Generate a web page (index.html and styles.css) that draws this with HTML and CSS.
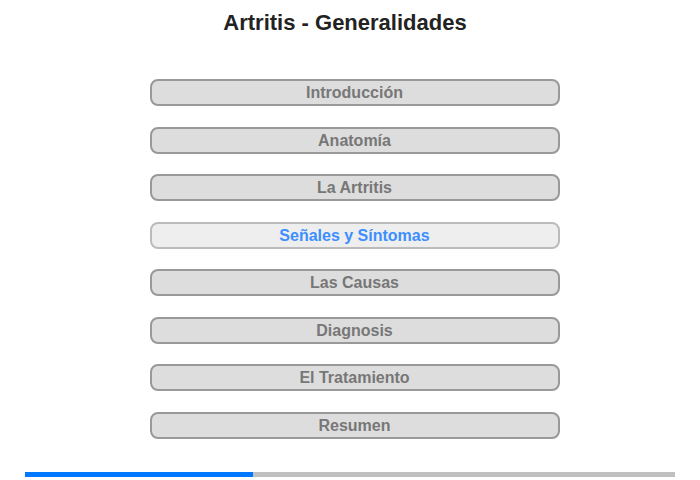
FILE: index.html
```html
<!DOCTYPE html>
<html lang="es">
<head>
<meta charset="utf-8">
<title>Artritis - Generalidades</title>
<link rel="stylesheet" href="styles.css">
</head>
<body>
<div class="page">
  <h1 class="title">Artritis - Generalidades</h1>
  <nav class="menu">
    <div class="item">Introducción</div>
    <div class="item">Anatomía</div>
    <div class="item">La Artritis</div>
    <div class="item active">Señales y Síntomas</div>
    <div class="item">Las Causas</div>
    <div class="item">Diagnosis</div>
    <div class="item">El Tratamiento</div>
    <div class="item">Resumen</div>
  </nav>
  <div class="progress"><div class="progress-fill" style="width:35%"></div></div>
</div>
</body>
</html>
```
FILE: styles.css
```css
html, body {
  margin: 0;
  padding: 0;
  background: #fff;
}
.page {
  width: 700px;
  height: 480px;
  font-family: "Liberation Sans", Arial, sans-serif;
  display: flex;
  flex-direction: column;
  align-items: center;
}
.title {
  margin: 10px 10px 0 0;
  font-size: 22px;
  line-height: 25px;
  font-weight: bold;
  color: #222;
  text-align: center;
}
.menu {
  margin-top: 44px;
  margin-left: 9px;
  width: 410px;
  display: flex;
  flex-direction: column;
  gap: 20.5px;
}
.item {
  box-sizing: border-box;
  height: 27px;
  border: 2px solid #999;
  border-radius: 8px;
  background: #dddddd;
  color: #777;
  font-size: 16px;
  font-weight: bold;
  line-height: 23px;
  text-align: center;
}
.item.active {
  background: #eeeeee;
  border-color: #bbbbbb;
  color: #3d8eff;
}
.progress {
  margin-top: 33px;
  width: 650px;
  height: 5px;
  background: #c0c0c0;
}
.progress-fill {
  height: 100%;
  background: #0078ff;
}
```
